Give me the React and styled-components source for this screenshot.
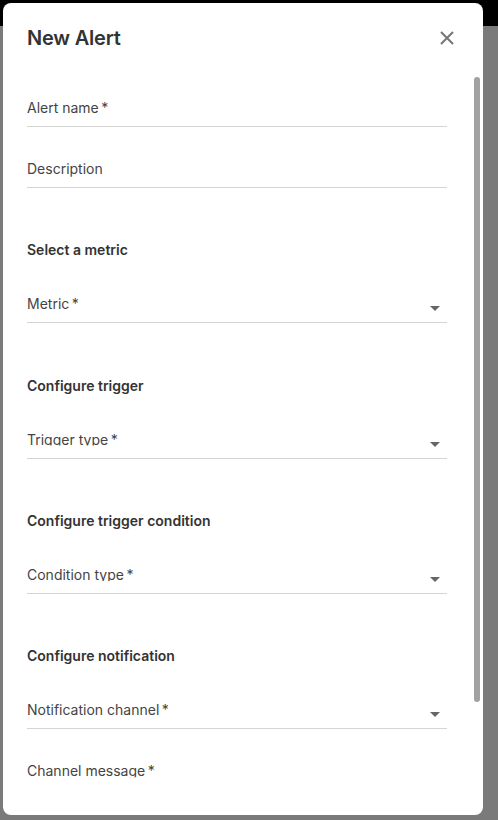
import styled, { createGlobalStyle } from "styled-components";

const GlobalStyle = createGlobalStyle`
  html, body {
    margin: 0;
    padding: 0;
    height: 100%;
    background: #7a7a7a;
    font-family: Inter, "Noto Sans", "Liberation Sans", sans-serif;
    -webkit-font-smoothing: antialiased;
  }
`;

const StyledPage = styled.div`
  position: relative;
  width: 498px;
  height: 820px;
  overflow: hidden;
`;

const StyledTopBar = styled.div`
  height: 26px;
  background: #000;
`;

const StyledDialog = styled.div`
  position: absolute;
  left: 3px;
  top: 3px;
  width: 480px;
  height: 812px;
  background: #fff;
  border-radius: 8px;
  overflow: hidden;
  display: flex;
  flex-direction: column;
`;

const StyledHeader = styled.div`
  display: flex;
  align-items: center;
  justify-content: space-between;
  padding: 21px 29px 0 24px;
`;

const StyledTitle = styled.h2`
  margin: 0;
  font-size: 20px;
  line-height: 28px;
  font-weight: 600;
  color: #333;
  letter-spacing: -0.2px;
`;

const StyledClose = styled.button`
  display: flex;
  padding: 0;
  border: none;
  background: none;
  cursor: pointer;
`;

const StyledBody = styled.div`
  display: flex;
  flex-direction: column;
  gap: 52.3px;
  padding: 46px 36px 0 24px;
`;

const StyledSection = styled.div`
  display: flex;
  flex-direction: column;
  gap: 32px;
`;

const StyledHeading = styled.div`
  font-size: 14px;
  line-height: 20px;
  font-weight: 600;
  color: #333;
  margin-bottom: 2px;
`;

const StyledField = styled.div`
  display: flex;
  align-items: flex-start;
  padding-bottom: 8px;
  border-bottom: ${({ $bare }) => ($bare ? "none" : "1px solid #d4d4d4")};
`;

const StyledLabel = styled.label`
  flex: 1;
  font-size: 14px;
  line-height: 20px;
  color: #444;
  clip-path: ${({ $clip }) => ($clip ? "inset(0 0 4px 0)" : "none")};
`;

const StyledArrow = styled.svg`
  margin: 12px 7px 0 0;
  flex-shrink: 0;
`;

const StyledThumb = styled.div`
  position: absolute;
  right: 3px;
  top: 74px;
  width: 6px;
  height: 625px;
  border-radius: 3px;
  background: #a2a2a2;
`;

const Field = ({ label, select, clip, bare }) => (
  <StyledField $bare={bare}>
    <StyledLabel $clip={clip}>
      {label}
      {"\u2009*"}
    </StyledLabel>
    {select && (
      <StyledArrow width="10" height="5" viewBox="0 0 10 5">
        <path d="M0 0h10L5 5z" fill="#666" />
      </StyledArrow>
    )}
  </StyledField>
);

const sections = [
  {
    heading: "Select a metric",
    fields: [{ label: "Metric", select: true, clip: true }],
  },
  {
    heading: "Configure trigger",
    fields: [{ label: "Trigger type", select: true, clip: true }],
  },
  {
    heading: "Configure trigger condition",
    fields: [{ label: "Condition type", select: true, clip: true }],
  },
  {
    heading: "Configure notification",
    fields: [
      { label: "Notification channel", select: true, clip: true },
      { label: "Channel message", clip: true, bare: true },
    ],
  },
];

const App = () => (
  <StyledPage>
    <GlobalStyle />
    <StyledTopBar />
    <StyledDialog>
      <StyledHeader>
        <StyledTitle>New Alert</StyledTitle>
        <StyledClose aria-label="Close">
          <svg width="14" height="14" viewBox="0 0 14 14">
            <path d="M1 1l12 12M13 1L1 13" stroke="#757575" strokeWidth="2" />
          </svg>
        </StyledClose>
      </StyledHeader>
      <StyledBody>
        <StyledSection>
          <Field label="Alert name" />
          <StyledField>
            <StyledLabel>Description</StyledLabel>
          </StyledField>
        </StyledSection>
        {sections.map((section) => (
          <StyledSection key={section.heading}>
            <StyledHeading>{section.heading}</StyledHeading>
            {section.fields.map((field) => (
              <Field key={field.label} {...field} />
            ))}
          </StyledSection>
        ))}
      </StyledBody>
      <StyledThumb />
    </StyledDialog>
  </StyledPage>
);

export default App;
